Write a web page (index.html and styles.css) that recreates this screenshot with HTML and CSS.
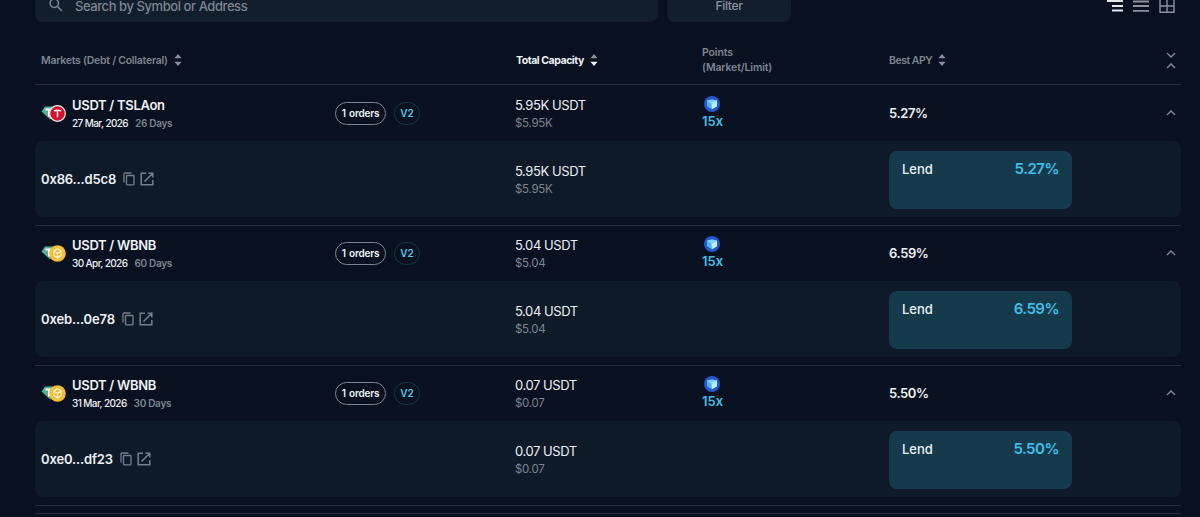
FILE: index.html
```html
<!DOCTYPE html>
<html lang="en">
<head>
  <meta charset="UTF-8" />
  <meta name="viewport" content="width=device-width, initial-scale=1" />
  <title>Markets</title>
  <link rel="stylesheet" href="styles.css">
</head>
<body>
  <!-- shared icons -->
  <svg class="sprite" aria-hidden="true">
    <symbol id="sort" viewBox="0 0 8 12"><path class="up" d="M4 0 7.5 4.2H0.5Z"/><path class="down" d="M4 12 0.5 7.8H7.5Z"/></symbol>
    <symbol id="sort-desc" viewBox="0 0 8 12"><path d="M4 0 7.5 4.2H0.5Z" fill="#8b929d"/><path d="M4 12 0.5 7.8H7.5Z"/></symbol>
    <symbol id="chevron" viewBox="0 0 10 6"><path d="M1 5 5 1 9 5" fill="none" stroke="currentColor" stroke-width="1.3"/></symbol>
    <symbol id="copy" viewBox="0 0 12 14"><path d="M1 10.5V2Q1 1 2 1H8.5M4 3.5H10.2Q11 3.5 11 4.3V12Q11 12.8 10.2 12.8H4.3Q3.5 12.8 3.5 12V4.3Q3.5 3.5 4.3 3.5Z" fill="none" stroke="currentColor" stroke-width="1.3"/></symbol>
    <symbol id="open" viewBox="0 0 14 14"><path d="M6 1.2H1.2V12.8H12.8V8M8.5 1.2H12.8V5.5M12.8 1.2 4.5 9.5" fill="none" stroke="currentColor" stroke-width="1.5"/></symbol>
    <symbol id="usdt" viewBox="0 0 18 14"><path d="M4 0.5H14L17.5 5.5 9 13.5 0.5 5.5Z" fill="#50af95"/><path d="M4.5 3.5H13M8 3.5V10.5" stroke="#fff" stroke-width="2"/></symbol>
    <symbol id="tsla" viewBox="0 0 18 18"><circle cx="9" cy="9" r="8.3" fill="#d0142c" stroke="#f1e4e6" stroke-width="1.3"/><path d="M5.2 6.2Q9 4.8 12.8 6.2M9 6V13" fill="none" stroke="#fff" stroke-width="1.5"/></symbol>
    <symbol id="wbnb" viewBox="0 0 18 18"><circle cx="9" cy="9" r="8.8" fill="#efb62a"/><circle cx="9" cy="9" r="7" fill="none" stroke="#f8d978" stroke-width=".7"/><path d="M9 4 12.8 6.3V11.2L9 13.8 5.2 11.2V6.3ZM5.5 6.5 9 8.8 12.5 6.5M9 9V13" fill="none" stroke="#fff5d2" stroke-width="1.3"/></symbol>
    <symbol id="cube" viewBox="0 0 16 16"><circle cx="8" cy="8" r="8" fill="#2458cc"/><path d="M3 4.5 8 3.4 13 4.5V10.3L8 13.3 3 10.3Z" fill="#54b5f8"/><path d="M3 4.5 8 3.4 13 4.5 7.5 8Z" fill="#80d2ff"/><path d="M7.5 8 13 4.5V10.3L8 13.3Z" fill="#c4edff"/></symbol>
  </svg>

  <main class="page">
    <div class="toolbar">
      <div class="search">
        <svg class="search-icon" viewBox="0 0 14 14"><circle cx="5.3" cy="5.3" r="4.2"/><path d="M8.5 8.5 13 13"/></svg>
        <span>Search by Symbol or Address</span>
      </div>
      <button class="filter">Filter</button>
      <div class="views">
        <svg class="active" viewBox="0 0 16 14"><path d="M0 1H16M5 6H16M5 10.5H16"/></svg>
        <svg viewBox="0 0 16 14"><path d="M0 1.5H16M0 6H16M0 10.8H16"/></svg>
        <svg class="grid-icon" viewBox="0 0 16 14"><path d="M1 0V12.3H15V0M8 0V12M1 6H15"/></svg>
      </div>
    </div>

    <div class="columns table-head">
      <div class="head-cell head-market">Markets (Debt / Collateral)<svg class="sort"><use href="#sort"/></svg></div>
      <div></div>
      <div class="head-cell head-total">Total Capacity<svg class="sort desc"><use href="#sort-desc"/></svg></div>
      <div class="head-points">Points<br>(Market/Limit)</div>
      <div class="head-cell head-apy">Best APY<svg class="sort"><use href="#sort"/></svg></div>
      <div class="collapse-all"><svg class="chevron flip"><use href="#chevron"/></svg><svg class="chevron"><use href="#chevron"/></svg></div>
    </div>

    <section class="market">
      <div class="columns summary">
        <div class="pair">
          <div class="tokens"><svg class="debt"><use href="#usdt"/></svg><svg class="collateral"><use href="#tsla"/></svg></div>
          <div>
            <div class="pair-name">USDT / TSLAon</div>
            <div class="maturity"><span>27 Mar, 2026</span><span class="days">26 Days</span></div>
          </div>
        </div>
        <div class="tags"><span class="orders">1 orders</span><span class="version">V2</span></div>
        <div class="capacity"><div class="amount">5.95K USDT</div><div class="usd">$5.95K</div></div>
        <div class="points"><svg><use href="#cube"/></svg><span>15x</span></div>
        <div class="apy">5.27%</div>
        <svg class="chevron"><use href="#chevron"/></svg>
      </div>
      <div class="columns order">
        <div class="address"><span>0x86...d5c8</span><svg class="copy"><use href="#copy"/></svg><svg class="open"><use href="#open"/></svg></div>
        <div></div>
        <div class="capacity"><div class="amount">5.95K USDT</div><div class="usd">$5.95K</div></div>
        <div></div>
        <button class="lend"><span>Lend</span><span class="rate">5.27%</span></button>
      </div>
    </section>

    <section class="market">
      <div class="columns summary">
        <div class="pair">
          <div class="tokens"><svg class="debt"><use href="#usdt"/></svg><svg class="collateral"><use href="#wbnb"/></svg></div>
          <div>
            <div class="pair-name">USDT / WBNB</div>
            <div class="maturity"><span>30 Apr, 2026</span><span class="days">60 Days</span></div>
          </div>
        </div>
        <div class="tags"><span class="orders">1 orders</span><span class="version">V2</span></div>
        <div class="capacity"><div class="amount">5.04 USDT</div><div class="usd">$5.04</div></div>
        <div class="points"><svg><use href="#cube"/></svg><span>15x</span></div>
        <div class="apy">6.59%</div>
        <svg class="chevron"><use href="#chevron"/></svg>
      </div>
      <div class="columns order">
        <div class="address"><span>0xeb...0e78</span><svg class="copy"><use href="#copy"/></svg><svg class="open"><use href="#open"/></svg></div>
        <div></div>
        <div class="capacity"><div class="amount">5.04 USDT</div><div class="usd">$5.04</div></div>
        <div></div>
        <button class="lend"><span>Lend</span><span class="rate">6.59%</span></button>
      </div>
    </section>

    <section class="market">
      <div class="columns summary">
        <div class="pair">
          <div class="tokens"><svg class="debt"><use href="#usdt"/></svg><svg class="collateral"><use href="#wbnb"/></svg></div>
          <div>
            <div class="pair-name">USDT / WBNB</div>
            <div class="maturity"><span>31 Mar, 2026</span><span class="days">30 Days</span></div>
          </div>
        </div>
        <div class="tags"><span class="orders">1 orders</span><span class="version">V2</span></div>
        <div class="capacity"><div class="amount">0.07 USDT</div><div class="usd">$0.07</div></div>
        <div class="points"><svg><use href="#cube"/></svg><span>15x</span></div>
        <div class="apy">5.50%</div>
        <svg class="chevron"><use href="#chevron"/></svg>
      </div>
      <div class="columns order">
        <div class="address"><span>0xe0...df23</span><svg class="copy"><use href="#copy"/></svg><svg class="open"><use href="#open"/></svg></div>
        <div></div>
        <div class="capacity"><div class="amount">0.07 USDT</div><div class="usd">$0.07</div></div>
        <div></div>
        <button class="lend"><span>Lend</span><span class="rate">5.50%</span></button>
      </div>
    </section>
    <div class="table-end"></div>
  </main>
</body>
</html>
```

FILE: styles.css
```css
:root {
  --bg: #091120;
  --panel: #0e1a28;
  --line: #243040;
  --text: #edf1f7;
  --muted: #7c8491;
  --accent: #40bfe8;
}
* {
  box-sizing: border-box;
}
body {
  margin: 0;
  height: 517px;
  overflow: hidden;
  background: var(--bg);
  color: var(--text);
  font-family: Inter, "Liberation Sans", sans-serif;
}
button {
  border: none;
  font-family: inherit;
  cursor: pointer;
}
.sprite {
  display: none;
}
.page {
  padding: 0 19px 0 35px;
}

/* toolbar */
.toolbar {
  display: flex;
  height: 22px;
  gap: 9px;
}
.search {
  display: flex;
  width: 623px;
  padding-left: 14px;
  gap: 12px;
  background: #121e2b;
  border-radius: 0 0 8px 8px;
  color: #7d8591;
  font-size: 13px;
  font-weight: 500;
  line-height: 13px;
  letter-spacing: -0.43px;
}
.search-icon {
  width: 14px;
  height: 14px;
  margin-top: -2px;
  fill: none;
  stroke: #7d8591;
  stroke-width: 1.5;
}
.filter {
  display: flex;
  justify-content: center;
  width: 124px;
  padding: 0;
  background: #121e2b;
  border-radius: 0 0 8px 8px;
  color: #8b929d;
  font-size: 12px;
  font-weight: 500;
  line-height: 12px;
  letter-spacing: -0.3px;
}
.views {
  display: flex;
  gap: 10px;
  margin-left: auto;
  padding-right: 6px;
}
.views svg {
  width: 16px;
  height: 14px;
  fill: none;
  stroke: #8d929c;
  stroke-width: 1.8;
}
.views .active {
  stroke: #e4e7ed;
}
.views .grid-icon {
  stroke-width: 1.4;
}

/* table */
.columns {
  display: grid;
  grid-template-columns: 294px 181px 186px 187px 1fr auto;
  align-items: center;
  padding: 0 5px 0 6px;
}
.table-head {
  height: 63px;
  margin-bottom: 1px;
  padding-top: 14px;
  border-bottom: 1px solid var(--line);
  color: var(--muted);
  font-size: 10.5px;
  font-weight: 600;
}
.head-cell {
  display: flex;
  align-items: center;
  gap: 6px;
}
.head-market {
  letter-spacing: -0.26px;
}
.head-total {
  color: var(--text);
  font-weight: 700;
  letter-spacing: -0.45px;
}
.head-apy {
  letter-spacing: -0.5px;
}
.head-points {
  line-height: 15px;
  letter-spacing: -0.15px;
}
.sort {
  width: 8px;
  height: 12px;
  fill: #8b929d;
}
.sort.desc {
  fill: #f0f3f8;
}
.collapse-all {
  display: grid;
  gap: 5px;
}
.chevron {
  width: 10px;
  height: 6px;
  color: #868d98;
}
.summary .chevron {
  margin-bottom: 1px;
}
.flip {
  transform: scaleY(-1);
}
.market {
  height: 140px;
  border-bottom: 1px solid var(--line);
}
.summary {
  height: 55px;
}
.pair {
  display: flex;
  align-items: center;
  gap: 6px;
}
.tokens {
  display: flex;
  align-items: center;
  margin-bottom: 1px;
}
.debt {
  width: 18px;
  height: 14px;
  margin-right: -10px;
}
.collateral {
  width: 17px;
  height: 17px;
}
.pair-name {
  font-size: 13px;
  font-weight: 600;
  line-height: 18px;
  letter-spacing: -0.3px;
}
.maturity {
  display: flex;
  gap: 7px;
  font-size: 10px;
  font-weight: 500;
  line-height: 18px;
  letter-spacing: -0.6px;
}
.days {
  color: var(--muted);
  font-weight: 600;
  letter-spacing: -0.3px;
}
.tags {
  display: flex;
  gap: 8px;
  margin-bottom: 1px;
  font-size: 10px;
  font-weight: 600;
}
.orders,
.version {
  display: flex;
  align-items: center;
  justify-content: center;
  height: 23px;
  border: 1px solid #7d8490;
  border-radius: 12px;
}
.orders {
  width: 51px;
  word-spacing: 1px;
  letter-spacing: -0.2px;
}
.version {
  width: 26px;
  border-color: #173642;
  color: #4fcbe8;
}
.capacity {
  margin-left: -1px;
}
.amount {
  font-size: 13px;
  line-height: 18px;
  letter-spacing: -0.43px;
}
.usd {
  color: var(--muted);
  font-size: 11.5px;
  line-height: 18px;
  letter-spacing: -0.3px;
}
.points {
  display: flex;
  flex-direction: column;
  align-items: flex-start;
  margin-bottom: 2px;
  color: var(--accent);
  font-size: 13px;
  font-weight: 600;
  line-height: 18px;
}
.points svg {
  width: 16px;
  height: 16px;
  margin-left: 2px;
}
.apy {
  margin-bottom: 1px;
  font-size: 13px;
  font-weight: 600;
  letter-spacing: -0.4px;
}
.order {
  height: 76px;
  padding-top: 2px;
  background: var(--panel);
  border-radius: 8px;
}
.address {
  display: flex;
  align-items: center;
  margin-bottom: 3px;
  font-size: 13px;
  font-weight: 600;
  letter-spacing: -0.15px;
}
.copy,
.open {
  color: #777f8b;
}
.copy {
  width: 12px;
  height: 14px;
  margin: 0 5px 0 7px;
}
.open {
  width: 14px;
  height: 14px;
}
.lend {
  display: flex;
  justify-content: space-between;
  width: 183px;
  height: 58px;
  padding: 9px 13px;
  background: #143a4c;
  border-radius: 8px;
  color: var(--text);
  font-size: 13px;
  font-weight: 500;
  line-height: 18px;
}
.rate {
  color: var(--accent);
  font-size: 15px;
  font-weight: 600;
  letter-spacing: -0.5px;
}
.table-end {
  height: 8px;
  border-bottom: 1px solid var(--line);
}
```
